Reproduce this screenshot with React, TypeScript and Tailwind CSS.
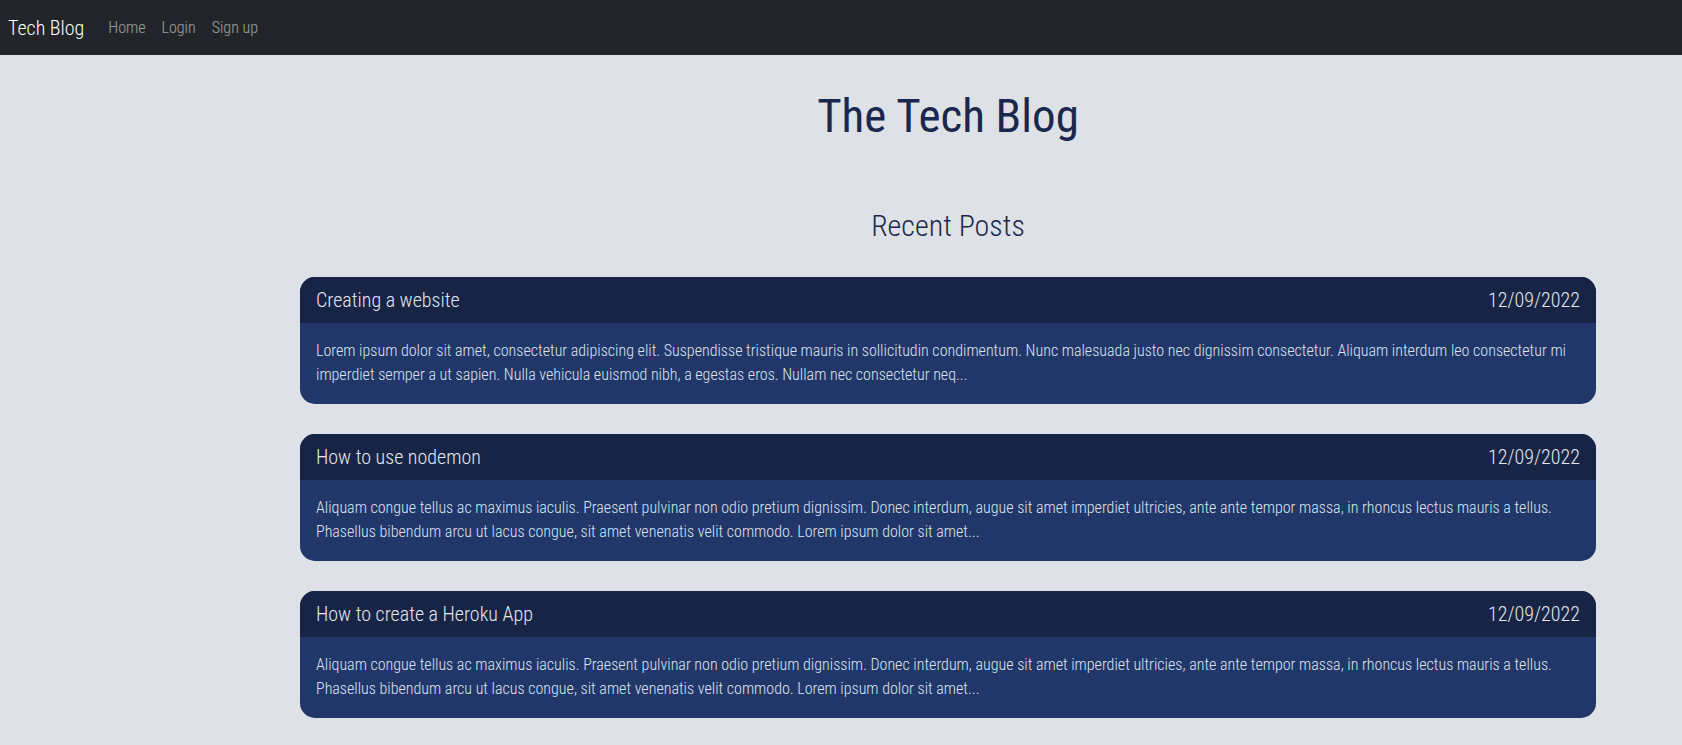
const POSTS = [
  {
    title: 'Creating a website',
    date: '12/09/2022',
    body: 'Lorem ipsum dolor sit amet, consectetur adipiscing elit. Suspendisse tristique mauris in sollicitudin condimentum. Nunc malesuada justo nec dignissim consectetur. Aliquam interdum leo consectetur mi imperdiet semper a ut sapien. Nulla vehicula euismod nibh, a egestas eros. Nullam nec consectetur neq...',
  },
  {
    title: 'How to use nodemon',
    date: '12/09/2022',
    body: 'Aliquam congue tellus ac maximus iaculis. Praesent pulvinar non odio pretium dignissim. Donec interdum, augue sit amet imperdiet ultricies, ante ante tempor massa, in rhoncus lectus mauris a tellus. Phasellus bibendum arcu ut lacus congue, sit amet venenatis velit commodo. Lorem ipsum dolor sit amet...',
  },
  {
    title: 'How to create a Heroku App',
    date: '12/09/2022',
    body: 'Aliquam congue tellus ac maximus iaculis. Praesent pulvinar non odio pretium dignissim. Donec interdum, augue sit amet imperdiet ultricies, ante ante tempor massa, in rhoncus lectus mauris a tellus. Phasellus bibendum arcu ut lacus congue, sit amet venenatis velit commodo. Lorem ipsum dolor sit amet...',
  },
];

export default function App() {
  return (
    <div className="min-h-screen bg-[#dee2e6] font-['Roboto',sans-serif] [font-stretch:condensed]">
      <nav className="flex h-[55px] items-center bg-[#212529] px-2">
        <span className="mr-4 text-[20px] font-light text-white">Tech Blog</span>
        <ul className="flex">
          {['Home', 'Login', 'Sign up'].map((l) => (
            <li key={l} className="px-2 text-base font-light text-white/55">
              {l}
            </li>
          ))}
        </ul>
      </nav>

      <main className="ml-[300px] w-[1296px] pb-6">
        <h1 className="pt-[33px] text-center text-[47px] leading-[1.2] font-normal text-[#1a284d]">
          The Tech Blog
        </h1>
        <h2 className="mt-[64px] text-center text-[30px] leading-[1.2] font-light text-[#1a284d]">
          Recent Posts
        </h2>

        <div className="mt-[33px] flex flex-col gap-[30px]">
          {POSTS.map((p) => (
            <article key={p.title} className="overflow-hidden rounded-[15px] bg-[#21376a]">
              <header className="flex items-center justify-between bg-[#172445] px-4 py-2 text-xl leading-[30px] font-light text-[#e3e7ee]">
                <span>{p.title}</span>
                <span>{p.date}</span>
              </header>
              <p className="px-4 pt-4 pb-[17px] text-base leading-6 font-light text-[#dfe4ee]">{p.body}</p>
            </article>
          ))}
        </div>
      </main>
    </div>
  );
}
